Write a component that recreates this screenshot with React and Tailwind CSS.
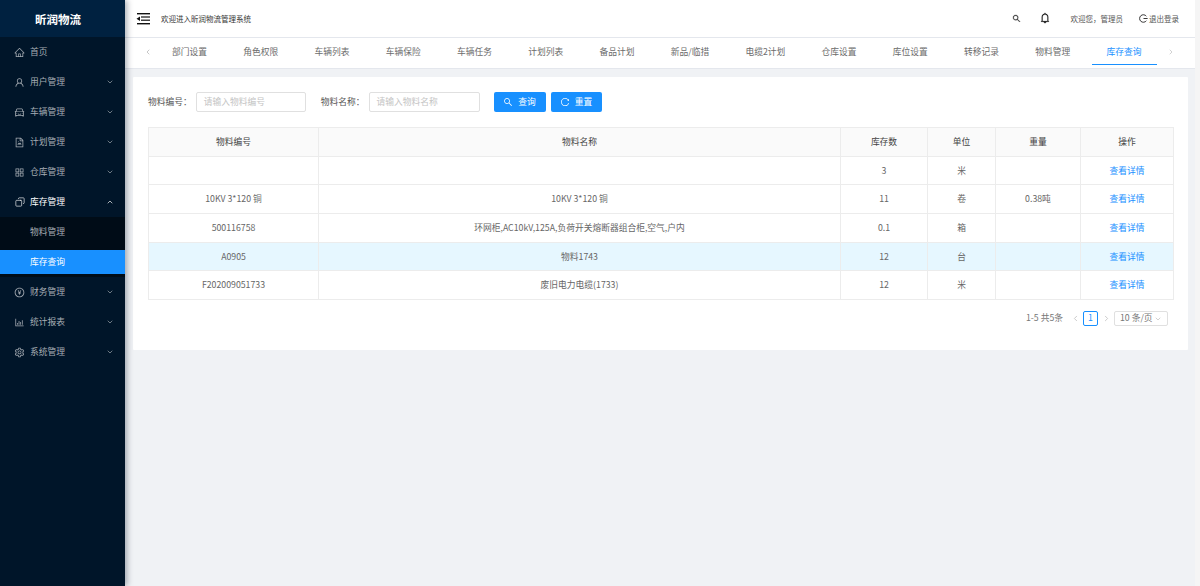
import React from "react";
import { Copy, ChevronDown, ChevronUp, ChevronLeft, ChevronRight } from "lucide-react";
import { AiOutlineHome, AiOutlineUser, AiOutlineCar, AiOutlineFileImage, AiOutlineAppstore, AiOutlinePayCircle, AiOutlineBarChart, AiOutlineSetting, AiOutlineSearch, AiOutlineBell, AiOutlineReload } from "react-icons/ai";

const menu = [
  ["首页", AiOutlineHome, null],
  ["用户管理", AiOutlineUser, "d"],
  ["车辆管理", AiOutlineCar, "d"],
  ["计划管理", AiOutlineFileImage, "d"],
  ["仓库管理", AiOutlineAppstore, "d"],
];
const menu2 = [
  ["财务管理", AiOutlinePayCircle],
  ["统计报表", AiOutlineBarChart],
  ["系统管理", AiOutlineSetting],
];
const tabs = ["部门设置", "角色权限", "车辆列表", "车辆保险", "车辆任务", "计划列表", "备品计划", "新品/临措", "电缆2计划", "仓库设置", "库位设置", "转移记录", "物料管理", "库存查询"];
const rows = [
  ["", "", "3", "米", ""],
  ["10KV 3*120 铜", "10KV 3*120 铜", "11", "卷", "0.38吨"],
  ["500116758", "环网柜,AC10kV,125A,负荷开关熔断器组合柜,空气,户内", "0.1", "箱", ""],
  ["A0905", "物料1743", "12", "台", ""],
  ["F202009051733", "废旧电力电缆(1733)", "12", "米", ""],
];

function MenuItem({ label, Icon, arrow }) {
  return (
    <div className="flex h-[30px] items-center pl-[14px] pr-[11px] text-[#a6adb4]">
      <Icon size={11} />
      <span className="ml-[5px] flex-1">{label}</span>
      {arrow && <ChevronDown size={8} strokeWidth={2} />}
    </div>
  );
}

export default function App() {
  return (
    <div className="flex h-[586px] w-[1200px] overflow-hidden bg-[#f0f2f5] text-[8.75px] leading-none [font-family:'Noto_Sans_CJK_SC','Noto_Sans',sans-serif]">
      <aside className="z-10 h-full w-[125px] shrink-0 bg-[#001529] shadow-[2px_0_6px_rgba(0,21,41,0.35)]">
        <div className="flex h-[37px] items-center justify-center bg-[#002140] pr-[9px] pt-[3px] text-[11.5px] font-bold text-white">昕润物流</div>
        {menu.map(([l, I, a]) => <MenuItem key={l} label={l} Icon={I} arrow={a} />)}
        <div className="flex h-[30px] items-center pl-[15px] pr-[11px] text-white">
          <Copy size={10} strokeWidth={1.5} className="-scale-x-100" />
          <span className="ml-[5px] flex-1">库存管理</span>
          <ChevronUp size={8} strokeWidth={2} />
        </div>
        <div className="flex flex-col gap-[6px] bg-[#000c17] py-[3px]">
          <div className="flex h-[24px] items-center pl-[30px] text-[#a6adb4]">物料管理</div>
          <div className="flex h-[24px] items-center bg-[#1890ff] pl-[30px] text-white">库存查询</div>
        </div>
        {menu2.map(([l, I]) => <MenuItem key={l} label={l} Icon={I} arrow="d" />)}
      </aside>
      <div className="flex min-w-0 flex-1 flex-col">
        <header className="flex h-[37px] shrink-0 items-center bg-white pl-[11px] pr-[16px] text-[#333]">
          <svg width="15" height="12" viewBox="0 0 15 12" className="text-[#111]" fill="currentColor">
            <rect x="1" y="0" width="13" height="1.4" />
            <rect x="5" y="3.4" width="9" height="1.2" />
            <rect x="5" y="6.6" width="9" height="1.2" />
            <rect x="1" y="10" width="13" height="1.4" />
            <polygon points="0.5,5.7 4,3.4 4,8" />
          </svg>
          <span className="ml-[10px] flex-1 text-[7.5px]">欢迎进入昕润物流管理系统</span>
          <AiOutlineSearch size={9} strokeWidth={30} />
          <AiOutlineBell size={12} strokeWidth={15} className="ml-[18px] -translate-y-px text-[#111]" />
          <span className="ml-[20px] text-[7.5px] text-[#555]">欢迎您，管理员</span>
          <span className="ml-[16px] flex items-center text-[7.5px] text-[#555]">
            <svg width="9" height="9" viewBox="0 0 12 12" fill="none" stroke="currentColor" strokeWidth="1.3" className="mr-[1px] text-[#333]">
              <path d="M9.8 3 A5 5 0 1 0 9.8 9" />
              <path d="M6 6 H11.5" />
            </svg>
            退出登录
          </span>
        </header>
        <nav className="relative flex h-[32px] shrink-0 items-center border-y border-[#e4e7ed] bg-white pl-[19px] pr-[20px] pb-[2px] text-[#6b6b6b]">
          <ChevronLeft size={8} className="mr-[20px] text-[#aaa]" />
          <div className="flex flex-1 gap-[36.25px]">
            {tabs.map((t, i) => (
              <span key={t} className={i === 13 ? "relative text-[#1890ff]" : ""}>
                {t}
                {i === 13 && <span className="absolute -bottom-[9px] -left-[15px] -right-[15px] h-px bg-[#1890ff]" />}
              </span>
            ))}
          </div>
          <ChevronRight size={8} className="text-[#bbb]" />
        </nav>
        <main className="ml-[8px] mr-[7px] mt-[8px] rounded-[1px] bg-white px-[15px] pb-[24px] pt-[15px]">
          <div className="flex h-[20px] items-center text-[#555]">
            <span>物料编号：</span>
            <div className="ml-[4px] flex h-[20px] w-[110px] items-center rounded-[2px] border border-[#e0e0e0] px-[7px] text-[#c4c4c4]">请输入物料编号</div>
            <span className="ml-[15px]">物料名称：</span>
            <div className="ml-[4px] flex h-[20px] w-[111px] items-center rounded-[2px] border border-[#e0e0e0] px-[7px] text-[#c4c4c4]">请输入物料名称</div>
            <button className="ml-[14px] flex h-[20px] w-[52px] items-center justify-center gap-[5px] rounded-[2px] bg-[#1890ff] text-white"><AiOutlineSearch size={10} />查询</button>
            <button className="ml-[5px] flex h-[20px] w-[51px] items-center justify-center gap-[5px] rounded-[2px] bg-[#1890ff] text-white"><AiOutlineReload size={10} />重置</button>
          </div>
          <table className="mt-[15px] w-[1025px] table-fixed border-collapse border border-[#ececec] text-[#666]">
            <colgroup>
              <col className="w-[170px]" /><col className="w-[522px]" /><col className="w-[87px]" /><col className="w-[68px]" /><col className="w-[85px]" /><col className="w-[93px]" />
            </colgroup>
            <thead>
              <tr className="h-[28.7px] bg-[#fafafa] text-[#444]">
                {["物料编号", "物料名称", "库存数", "单位", "重量", "操作"].map((h) => (
                  <th key={h} className="border border-[#ececec] pt-px font-normal">{h}</th>
                ))}
              </tr>
            </thead>
            <tbody>
              {rows.map((r, i) => (
                <tr key={i} className={i === 3 ? "h-[28.7px] bg-[#e6f7ff]" : "h-[28.7px]"}>
                  {r.map((c, j) => <td key={j} className="border border-[#ececec] pt-px text-center">{c}</td>)}
                  <td className="border border-[#ececec] pt-px text-center text-[#1890ff]">查看详情</td>
                </tr>
              ))}
            </tbody>
          </table>
          <div className="mt-[11px] flex h-[15px] items-center justify-end pr-[5px] text-[#777]">
            <span>1-5 共5条</span>
            <ChevronLeft size={9} className="ml-[8px] text-[#bbb]" />
            <span className="ml-[3px] flex h-[15px] w-[15px] items-center justify-center rounded-[2px] border border-[#1890ff] text-[#1890ff]">1</span>
            <ChevronRight size={9} className="ml-[4px] text-[#bbb]" />
            <span className="ml-[3px] flex h-[15px] w-[54px] items-center justify-between rounded-[2px] border border-[#e0e0e0] px-[5px]">10 条/页<ChevronDown size={8} className="text-[#bbb]" /></span>
          </div>
        </main>
      </div>
      <div className="z-10 h-full w-[5px] shrink-0 bg-[#f5f5f5]" />
    </div>
  );
}
